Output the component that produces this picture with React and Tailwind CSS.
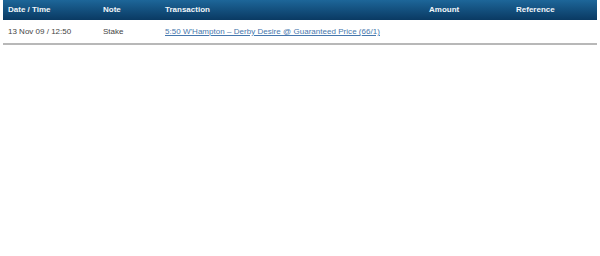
import React from "react";

const rows = [
    {
        date: "13 Nov 09 / 12:50",
        note: "Stake",
        transaction: "5:50 W'Hampton – Derby Desire @ Guaranteed Price (66/1)",
        amount: "",
        reference: "",
    },
];

const App = () => {
    return (
        <div className="w-[600px] h-[256px] bg-white px-[3px] font-['Liberation_Sans',Arial,sans-serif] text-[8px]">
            {/* Header */}
            <div className="flex items-center h-[20px] bg-gradient-to-b from-[#1d6699] to-[#0a3a63] text-[#f2f6fa] font-bold">
                <div className="w-[95px] pl-[5px]">Date / Time</div>
                <div className="w-[62px] pl-[5px]">Note</div>
                <div className="w-[264px] pl-[5px]">Transaction</div>
                <div className="w-[87px] pl-[5px]">Amount</div>
                <div className="flex-1 pl-[5px]">Reference</div>
            </div>

            {/* Rows */}
            {rows.map((row, i) => (
                <div
                    key={i}
                    className="flex items-center h-[25px] pt-px border-b-2 border-[#b8b8b8] text-[#444]"
                >
                    <div className="w-[95px] pl-[5px]">{row.date}</div>
                    <div className="w-[62px] pl-[5px]">{row.note}</div>
                    <div className="w-[264px] pl-[5px]">
                        <a href="#" className="text-[#4677ad] underline tracking-[0.03px]">
                            {row.transaction}
                        </a>
                    </div>
                    <div className="w-[87px] pl-[5px]">{row.amount}</div>
                    <div className="flex-1 pl-[5px]">{row.reference}</div>
                </div>
            ))}
        </div>
    );
};

export default App;
